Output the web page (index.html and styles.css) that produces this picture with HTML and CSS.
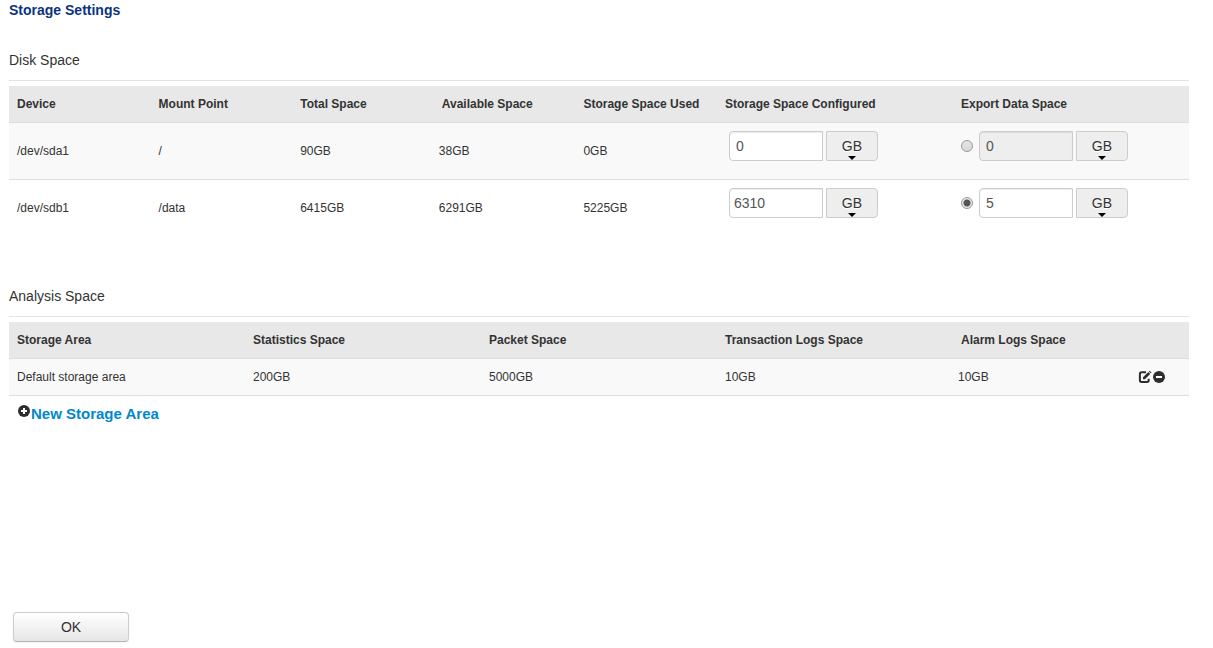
FILE: index.html
```html
<!DOCTYPE html>
<html lang="en">
<head>
<meta charset="utf-8">
<title>Storage Settings</title>
<link rel="stylesheet" href="styles.css">
</head>
<body>
<main class="page">
  <h1 class="page-title">Storage Settings</h1>

  <form class="settings">
    <section class="section disk">
      <h2 class="section-title">Disk Space</h2>
      <table class="grid">
        <colgroup>
          <col class="col-narrow"><col class="col-narrow"><col class="col-narrow"><col class="col-narrow"><col class="col-narrow">
          <col class="col-wide"><col class="col-wide">
        </colgroup>
        <thead>
          <tr>
            <th scope="col">Device</th>
            <th scope="col">Mount Point</th>
            <th scope="col">Total Space</th>
            <th scope="col">Available Space</th>
            <th scope="col">Storage Space Used</th>
            <th scope="col">Storage Space Configured</th>
            <th scope="col">Export Data Space</th>
          </tr>
        </thead>
        <tbody>
          <tr class="disk-row">
            <td>/dev/sda1</td>
            <td>/</td>
            <td>90GB</td>
            <td class="tight">38GB</td>
            <td>0GB</td>
            <td class="field-cell">
              <div class="field configured">
                <input class="amount" type="text" value="0" aria-label="Storage space configured for /dev/sda1">
                <span class="unit"><select class="unit-select" aria-label="Unit of configured space for /dev/sda1"><option>GB</option></select></span>
              </div>
            </td>
            <td class="field-cell">
              <div class="field">
                <input class="pick" type="radio" name="export" aria-label="Export to /dev/sda1">
                <input class="amount" type="text" value="0" disabled aria-label="Export data space on /dev/sda1">
                <span class="unit"><select class="unit-select" aria-label="Unit of export space on /dev/sda1"><option>GB</option></select></span>
              </div>
            </td>
          </tr>
          <tr class="disk-row">
            <td>/dev/sdb1</td>
            <td>/data</td>
            <td>6415GB</td>
            <td class="tight">6291GB</td>
            <td>5225GB</td>
            <td class="field-cell">
              <div class="field configured">
                <input class="amount amount-long" type="text" value="6310" aria-label="Storage space configured for /dev/sdb1">
                <span class="unit"><select class="unit-select" aria-label="Unit of configured space for /dev/sdb1"><option>GB</option></select></span>
              </div>
            </td>
            <td class="field-cell">
              <div class="field">
                <input class="pick" type="radio" name="export" checked aria-label="Export to /dev/sdb1">
                <input class="amount" type="text" value="5" aria-label="Export data space on /dev/sdb1">
                <span class="unit"><select class="unit-select" aria-label="Unit of export space on /dev/sdb1"><option>GB</option></select></span>
              </div>
            </td>
          </tr>
        </tbody>
      </table>
    </section>

    <section class="section analysis">
      <h2 class="section-title">Analysis Space</h2>
      <table class="grid">
        <colgroup>
          <col class="col-wide"><col class="col-wide"><col class="col-wide"><col class="col-wide"><col class="col-wide">
        </colgroup>
        <thead>
          <tr>
            <th scope="col">Storage Area</th>
            <th scope="col">Statistics Space</th>
            <th scope="col">Packet Space</th>
            <th scope="col">Transaction Logs Space</th>
            <th scope="col">Alarm Logs Space</th>
          </tr>
        </thead>
        <tbody>
          <tr>
            <td>Default storage area</td>
            <td>200GB</td>
            <td>5000GB</td>
            <td>10GB</td>
            <td class="tight">
              <div class="with-actions">
                <span>10GB</span>
                <span class="actions">
                  <button class="icon-button" type="button" aria-label="Edit storage area">
                    <svg class="icon" viewBox="0 0 14 14"><path d="M8 2.2H3.6Q1.9 2.2 1.9 4V10.200Q1.900 11.900 3.600 11.900H9Q10.700 11.900 10.700 10.200V8.800" fill="none" stroke="#2d2d2d" stroke-width="2"/><path d="M5 7.300 10.300 2 12.200 3.900 6.900 9.200H5Z" fill="#2d2d2d"/><path d="M10.900 1.400 11.700.7 13.500 2.500 12.800 3.300Z" fill="#2d2d2d"/></svg>
                  </button>
                  <button class="icon-button" type="button" aria-label="Remove storage area">
                    <svg class="icon" viewBox="0 0 14 14"><circle cx="7" cy="7" r="6" fill="#2d2d2d"/><path d="M4 6h6v2H4z" fill="#fff"/></svg>
                  </button>
                </span>
              </div>
            </td>
          </tr>
        </tbody>
      </table>
      <a class="add-link" href="#new">
        <svg class="icon" viewBox="0 0 14 14" aria-hidden="true"><circle cx="7" cy="7" r="6" fill="#2d2d2d"/><path d="M6 4h2v2h2v2H8v2H6V8H4V6h2z" fill="#fff"/></svg>
        <span>New Storage Area</span>
      </a>
    </section>

    <button class="ok-button" type="submit">OK</button>
  </form>
</main>
</body>
</html>
```
FILE: styles.css
```css
* {
  box-sizing: border-box;
}

body {
  margin: 0;
  background: #fff;
  color: #333;
  font: 12px/20px "Liberation Sans", Arial, sans-serif;
}

.page {
  padding: 0 24px 0 9px;
}

.page-title {
  margin: 0;
  color: #0b3380;
  font-size: 14px;
  line-height: 20px;
}

.section-title {
  margin: 0 0 5px;
  padding-bottom: 10px;
  border-bottom: 1px solid #e3e3e3;
  font-size: 14px;
  font-weight: normal;
  line-height: 20px;
}

.disk {
  padding-top: 30px;
}

.analysis {
  padding-top: 50px;
}

.grid {
  width: 100%;
  table-layout: fixed;
  border-collapse: separate;
  border-spacing: 0;
}

.col-narrow {
  width: 12%;
}

.col-wide {
  width: 20%;
}

.grid th,
.grid td {
  padding: 8px;
  text-align: left;
  white-space: nowrap;
}

.grid th {
  background: #e8e8e8;
}

.grid td {
  border-top: 1px solid #ddd;
}

.grid tbody tr:nth-child(odd) td {
  background: #f9f9f9;
}

.analysis .grid td {
  border-bottom: 1px solid #ddd;
}

.grid .disk-row td {
  height: 57px;
}

.grid .tight {
  padding-left: 5px;
}

.grid .disk-row .field-cell {
  vertical-align: top;
}

.field {
  display: flex;
  align-items: center;
  gap: 3px;
}

.configured {
  padding-left: 4px;
}

.pick {
  appearance: none;
  width: 12px;
  height: 12px;
  margin: 0 3px 0 0;
  border: 1px solid #999;
  border-radius: 50%;
  background: linear-gradient(#e4e4e4, #d8d8d8);
}

.pick:checked {
  background: radial-gradient(circle, #555 0 3px, #e6e6e6 4px);
}

.amount {
  width: 94px;
  height: 30px;
  padding: 4px 6px;
  border: 1px solid #ccc;
  border-radius: 4px 0 0 4px;
  background: #fff;
  box-shadow: inset 0 1px 1px rgba(0, 0, 0, 0.08);
  color: #555;
  font: 14px/20px "Liberation Sans", Arial, sans-serif;
}

.amount-long {
  padding-left: 4px;
}

.amount:disabled {
  background: #eee;
}

.unit {
  position: relative;
  display: block;
}

.unit::after {
  content: "";
  position: absolute;
  left: 22px;
  bottom: 1px;
  border: 4px solid transparent;
  border-top-color: #000;
  border-bottom: 0;
  pointer-events: none;
}

.unit-select {
  display: block;
  appearance: none;
  width: 52px;
  height: 30px;
  padding: 0;
  border: 1px solid #ccc;
  border-radius: 0 4px 4px 0;
  background: #eee;
  color: #333;
  font: 14px/20px "Liberation Sans", Arial, sans-serif;
  text-align: center;
  text-align-last: center;
  text-shadow: 0 1px 0 #fff;
}

.with-actions {
  display: flex;
  justify-content: space-between;
  padding-right: 15px;
}

.actions {
  display: flex;
  align-items: center;
}

.icon-button {
  display: block;
  padding: 0;
  border: 0;
  background: none;
}

.icon {
  display: block;
  width: 14px;
  height: 14px;
}

.add-link {
  display: inline-flex;
  padding: 8px;
  color: #08c;
  font-size: 15px;
  font-weight: bold;
  line-height: 20px;
  text-decoration: none;
}

.ok-button {
  display: block;
  width: 116px;
  height: 30px;
  margin: 180px 0 6px 4px;
  border: 1px solid #ccc;
  border-bottom-color: #b3b3b3;
  border-radius: 4px;
  background: linear-gradient(#fff, #e6e6e6);
  box-shadow: 0 1px 2px rgba(0, 0, 0, 0.05);
  color: #333;
  font: 14px/20px "Liberation Sans", Arial, sans-serif;
}
```
